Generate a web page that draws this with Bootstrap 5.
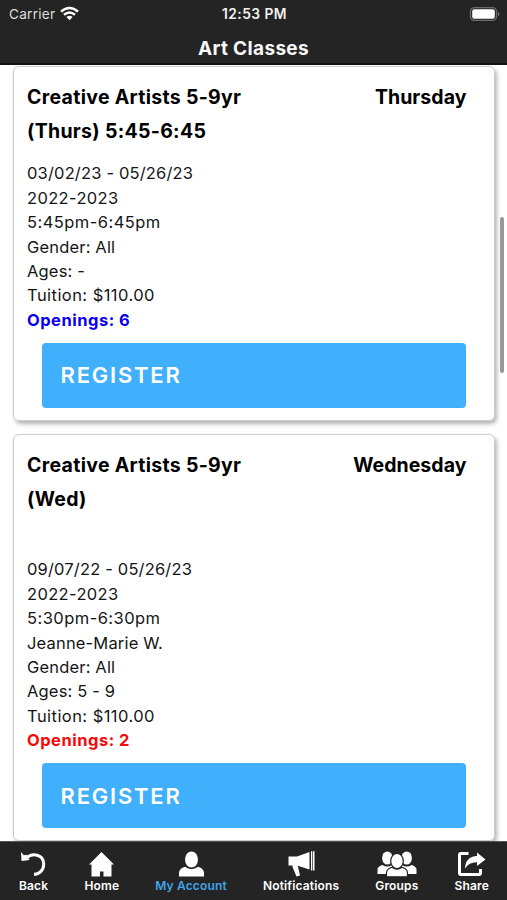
<!DOCTYPE html>
<html lang="en">
<head>
<meta charset="utf-8">
<meta name="viewport" content="width=device-width, initial-scale=1">
<title>Art Classes</title>
<link href="https://cdn.jsdelivr.net/npm/bootstrap@5.3.0/dist/css/bootstrap.min.css" rel="stylesheet">
<style>
  body { font-family: Inter, "Liberation Sans", sans-serif; color: #000; background: #fff; }
  .app-screen { height: 900px; }
  .app-header { background: #242424; height: 65px; color: #fff; border-bottom: 2px solid #111; }
  .status-bar { height: 28px; padding: 0 7px 0 9px; font-size: 13.6px; color: #dedede; }
  .status-bar > * { flex: 1 1 0; }
  .status-time { font-weight: 600; font-size: 13.8px; letter-spacing: .45px; color: #f2f2f2; }
  .carrier-name { letter-spacing: .25px; }
  .screen-title { font-size: 19px; font-weight: 700; line-height: 42px; letter-spacing: .35px; color: #f8f8f8; }
  .class-list { padding: 1px 12px 0 13px; }
  .class-card { border: 1.5px solid #ccc; border-radius: 6px; box-shadow: 2px 3px 4px rgba(0,0,0,.3); padding: 12.5px 27.5px 0 13px; }
  .class-card-1 { height: 355px; margin-bottom: 13px; }
  .class-card-2 { height: 407px; }
  .class-name, .class-day { font-size: 19.5px; font-weight: 700; line-height: 34.2px; letter-spacing: .3px; }
  .class-day { letter-spacing: .05px; }
  .class-name { width: 235px; }
  .class-card-1 .class-heading { margin-bottom: 13.3px; }
  .class-card-2 .class-heading { margin-bottom: 41.3px; }
  .class-info { font-size: 16.5px; line-height: 24.43px; letter-spacing: .17px; color: #151515; }
  .class-years { letter-spacing: .35px; }
  .class-time, .class-tuition { letter-spacing: .45px; }
  .openings { font-weight: 700; letter-spacing: .5px; }
  .openings-many { color: #0b00ee; }
  .openings-few { color: #f50a0a; }
  .btn-register { --bs-btn-bg: #40affc; --bs-btn-color: #fff; --bs-btn-hover-bg: #2ba0f0; --bs-btn-hover-color: #fff; --bs-btn-border-width: 0; --bs-btn-border-radius: 4px;
    height: 65px; margin: 10.7px 0 0 15px; padding: 1px 18.5px 0; width: calc(100% - 16px); font-size: 22px; font-weight: 600; letter-spacing: 1.8px; }
  .tab-bar { height: 59px; background: #242424; border-top: 1px solid #555; padding: 9px 18px 0 19px; }
  .tab-bar a { color: #fff; font-size: 12px; font-weight: 600; line-height: 16px; letter-spacing: .15px; text-decoration: none; }
  .tab-bar a.active { color: #40a4e8; }
  .tab-bar svg { display: block; height: 27px; color: #fff; }
  .scroll-thumb { position: absolute; right: 3px; top: 217px; width: 4px; height: 156px; border-radius: 2px; background: #999; }
</style>
</head>
<body>
<div class="app-screen d-flex flex-column position-relative overflow-hidden">
  <header class="app-header flex-shrink-0 position-relative z-1">
    <div class="status-bar d-flex align-items-center">
      <div class="d-flex align-items-center gap-1">
        <span class="carrier-name">Carrier</span>
        <svg width="21" height="16" viewBox="0 0 21 16" fill="none" stroke="#fff" stroke-width="2.500"><path d="M2 5.600Q10.500-1.700 19 5.600"/><path d="M5 8.800Q10.500 4.200 16 8.800"/><path d="M7.400 11Q10.500 8.700 13.600 11L10.500 14.300Z" fill="#fff" stroke="none"/></svg>
      </div>
      <div class="status-time text-center">12:53 PM</div>
      <div class="d-flex justify-content-end">
        <svg width="31" height="15" viewBox="0 0 31 15"><rect x="1.500" y=".6" width="26" height="12.800" rx="4" fill="#242424" stroke="#6c6c6c" stroke-width="1.300"/><rect x="3.200" y="2.300" width="22.600" height="9.400" rx="2" fill="#fff"/><path d="M29 4.700q1.500 1 1.500 2.300T29 9.300z" fill="#777"/></svg>
      </div>
    </div>
    <h1 class="screen-title text-center m-0">Art Classes</h1>
  </header>

  <main class="class-list flex-grow-1 overflow-hidden">
    <article class="class-card class-card-1">
      <div class="class-heading d-flex justify-content-between">
        <h2 class="class-name m-0">Creative Artists 5-9yr (Thurs) 5:45-6:45</h2>
        <div class="class-day">Thursday</div>
      </div>
      <div class="class-info">
        <div>03/02/23 - 05/26/23</div>
        <div class="class-years">2022-2023</div>
        <div class="class-time">5:45pm-6:45pm</div>
        <div>Gender: All</div>
        <div>Ages: -</div>
        <div class="class-tuition">Tuition: $110.00</div>
        <div class="openings openings-many">Openings: 6</div>
      </div>
      <button type="button" class="btn btn-register text-start">REGISTER</button>
    </article>

    <article class="class-card class-card-2">
      <div class="class-heading d-flex justify-content-between">
        <h2 class="class-name m-0">Creative Artists 5-9yr (Wed)</h2>
        <div class="class-day">Wednesday</div>
      </div>
      <div class="class-info">
        <div>09/07/22 - 05/26/23</div>
        <div class="class-years">2022-2023</div>
        <div class="class-time">5:30pm-6:30pm</div>
        <div>Jeanne-Marie W.</div>
        <div>Gender: All</div>
        <div>Ages: 5 - 9</div>
        <div class="class-tuition">Tuition: $110.00</div>
        <div class="openings openings-few">Openings: 2</div>
      </div>
      <button type="button" class="btn btn-register text-start">REGISTER</button>
    </article>
  </main>
  <div class="scroll-thumb"></div>

  <nav class="tab-bar d-flex justify-content-between flex-shrink-0 position-relative z-1">
    <a href="#" class="d-flex flex-column align-items-center">
      <svg width="27" viewBox="0 0 27 27"><path d="M6.500 7C12 1.500 23.700 3 23.700 13C23.700 19.500 19 23.300 14 23.300" fill="none" stroke="currentColor" stroke-width="3"/><path d="M1 1L3.800 4.300L6.500 3.800L9.500 9L1.500 10Z" fill="currentColor"/></svg>
      <span>Back</span>
    </a>
    <a href="#" class="d-flex flex-column align-items-center">
      <svg width="27" viewBox="0 0 27 27" fill="currentColor"><path d="M13.500 1L26 13.500H23.500V25.500H15.500V20.500H12V25.500H3.500V13.500H1Z"/></svg>
      <span>Home</span>
    </a>
    <a href="#" class="active d-flex flex-column align-items-center">
      <svg width="27" viewBox="0 0 27 27" fill="currentColor"><ellipse cx="13.500" cy="8.500" rx="6.500" ry="8"/><path d="M1 25.500V22Q1 17.500 7 15.800Q13.500 20.500 20 15.800Q26 17.500 26 22V25.500Z"/></svg>
      <span>My Account</span>
    </a>
    <a href="#" class="d-flex flex-column align-items-center">
      <svg width="27" viewBox="0 0 27 27" fill="currentColor"><path d="M.5 5.500H9L21.500 1V18.500L9 14.500H.5Z"/><path d="M4.500 13.500H9.500L12 24.500L8.500 25.500L4.500 16Z"/><path d="M23 .3H24.300V19.500H23ZM25 .3H26.500V19.500H25Z"/></svg>
      <span>Notifications</span>
    </a>
    <a href="#" class="d-flex flex-column align-items-center">
      <svg width="40" viewBox="0 0 40 27" fill="currentColor"><ellipse cx="10.300" cy="7" rx="5.200" ry="6.600"/><ellipse cx="29.700" cy="7" rx="5.200" ry="6.600"/><path d="M.5 23V18.500Q.5 15.500 5.500 14Q10 17 15 14V23Z"/><path d="M39.500 23V18.500Q39.500 15.500 34.500 14Q30 17 25 14V23Z"/><g stroke="#242424" stroke-width="1.200"><path d="M9.500 25.800V22Q9.500 18 15 16.300Q20 20 25 16.300Q30.500 18 30.500 22V25.800Z"/><ellipse cx="20" cy="10" rx="6.300" ry="7.600"/></g></svg>
      <span>Groups</span>
    </a>
    <a href="#" class="d-flex flex-column align-items-center">
      <svg width="29" viewBox="0 0 29 27"><path d="M11.500 2.500H4Q2.500 2.500 2.500 4V22Q2.500 23.500 4 23.500H22Q23.500 23.500 23.500 22V18" fill="none" stroke="currentColor" stroke-width="3"/><path d="M8 17.500Q8.500 5.500 20 5V1.500L28.500 8.500L20 15V11.200Q12 11 8 17.500Z" fill="currentColor"/></svg>
      <span>Share</span>
    </a>
  </nav>
</div>
<script src="https://cdn.jsdelivr.net/npm/bootstrap@5.3.0/dist/js/bootstrap.bundle.min.js"></script>
</body>
</html>
